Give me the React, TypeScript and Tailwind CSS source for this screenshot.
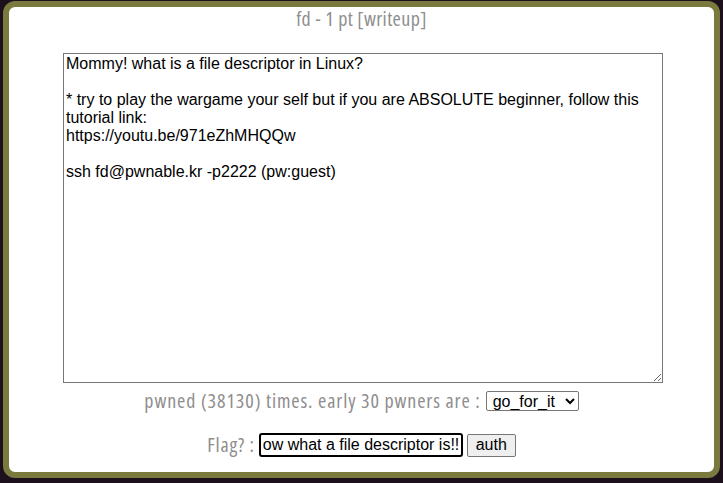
import { JSX } from "react";

const challengeText = `Mommy! what is a file descriptor in Linux?

* try to play the wargame your self but if you are ABSOLUTE beginner, follow this tutorial link:
https://youtu.be/971eZhMHQQw

ssh fd@pwnable.kr -p2222 (pw:guest)
`;

export default function App(): JSX.Element {
    return (
        <div className="h-[483px] w-[723px] overflow-hidden bg-[#1c101c] pl-[3px] pt-px">
            <div className="flex h-[477px] w-[717px] flex-col items-center rounded-[12px] border-[6px] border-[#7b7a3e] bg-white">
                <div className="h-[24px] text-[20px] leading-[24px] tracking-[0.4px] text-[#8e8e8e] [font-family:'Open_Sans',sans-serif] [font-stretch:semi-condensed]">
                    fd - 1 pt [writeup]
                </div>
                <textarea
                    readOnly
                    defaultValue={challengeText}
                    className="ml-[3px] mt-[22px] h-[330px] w-[600px] resize border border-[#767676] px-[2px] py-[1px] text-[16px] leading-[18px] text-black outline-none [font-family:'Liberation_Sans',Arial,sans-serif]"
                />
                <div className="mt-[6px] flex h-[24px] items-center gap-[5px] text-[20px] leading-[24px] tracking-[0.9px] text-[#8e8e8e] [font-family:'Open_Sans',sans-serif] [font-stretch:semi-condensed]">
                    <span>pwned (38130) times. early 30 pwners are :</span>
                    <select className="h-[20px] w-[93px] rounded-[2px] border border-[#767676] bg-white px-[2px] text-[16px] leading-[18px] tracking-normal text-black [font-family:'Liberation_Sans',Arial,sans-serif]">
                        <option>go_for_it</option>
                    </select>
                </div>
                <div className="mt-[20px] flex h-[24px] items-center gap-[4px] text-[20px] leading-[24px] tracking-[0.8px] text-[#8e8e8e] [font-family:'Open_Sans',sans-serif] [font-stretch:semi-condensed]">
                    <span>Flag? :</span>
                    <input
                        readOnly
                        value="ow what a file descriptor is!!"
                        className="h-[24px] w-[204px] rounded-[3px] border-2 border-black px-[2px] text-[16px] tracking-normal text-black outline-none [font-family:'Liberation_Sans',Arial,sans-serif]"
                    />
                    <button className="h-[23px] w-[49px] rounded-[2px] border border-[#767676] bg-[#efefef] text-[16px] leading-[18px] tracking-normal text-black [font-family:'Liberation_Sans',Arial,sans-serif]">
                        auth
                    </button>
                </div>
            </div>
        </div>
    );
}
